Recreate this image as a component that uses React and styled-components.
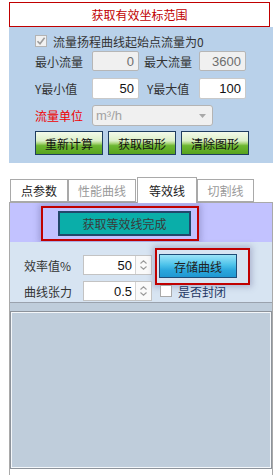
import React from "react";
import styled, { createGlobalStyle } from "styled-components";

const GlobalStyle = createGlobalStyle`
  html, body {
    margin: 0;
    padding: 0;
    background: #ffffff;
  }
  body {
    font-family: "Noto Sans CJK SC", "Noto Sans", sans-serif;
    font-size: 12px;
    color: #222;
  }
  * { box-sizing: border-box; }
`;

const Page = styled.div`
  width: 274px;
  height: 475px;
  padding-left: 9px;
  overflow: hidden;
`;

const HeaderBox = styled.div`
  margin-top: 2px;
  width: 261px;
  height: 25px;
  border: 1px solid #c00000;
  background: #fff;
  color: #c00000;
  display: flex;
  align-items: center;
  justify-content: center;
  font-size: 12px;
`;

const RangePanel = styled.div`
  width: 264px;
  height: 136px;
  background: #b9d1ea;
  padding: 6px 0 0 26px;
  display: flex;
  flex-direction: column;
`;

const Row = styled.div`
  display: flex;
  align-items: center;
  height: ${(p) => p.h || 21}px;
  margin-top: ${(p) => p.mt || 0}px;
`;

const CheckBox = styled.span`
  width: 12px;
  height: 12px;
  border: 1px solid ${(p) => (p.disabled ? "#b4b4b4" : "#a9a9a9")};
  background: ${(p) => (p.disabled ? "#f2f2f2" : "#fff")};
  display: inline-flex;
  align-items: center;
  justify-content: center;
  margin-left: ${(p) => p.ml || 0}px;
`;

const CheckText = styled.span`
  margin-left: ${(p) => p.ml || 6}px;
  color: ${(p) => p.color || "#333"};
  font-size: 12px;
`;

const Label = styled.span`
  width: ${(p) => p.w}px;
  margin-left: ${(p) => p.ml || 0}px;
  color: ${(p) => p.color || "#333"};
  white-space: nowrap;
  font-size: 12px;
`;

const NumBox = styled.div`
  width: 47px;
  height: ${(p) => p.h || 20}px;
  border: 1px solid ${(p) => (p.disabled ? "#b6b6b6" : "#c9c9c9")};
  border-radius: 2px;
  background: ${(p) => (p.disabled ? "#f0f0f0" : "#fff")};
  color: ${(p) => (p.disabled ? "#6d6d6d" : "#111")};
  font-family: "Liberation Sans", "Noto Sans", sans-serif;
  font-size: 13px;
  display: flex;
  align-items: center;
  justify-content: flex-end;
  padding-right: 4px;
`;

const SelectBox = styled.div`
  width: 121px;
  height: 21px;
  border: 1px solid #b4b4b4;
  border-radius: 3px;
  background: #f0f0f0;
  color: #a2a2a2;
  font-family: "Liberation Sans", "Noto Sans", sans-serif;
  font-size: 13px;
  display: flex;
  align-items: center;
  justify-content: space-between;
  padding: 0 6px 0 3px;
`;

const GreenButton = styled.div`
  width: 68px;
  height: 24px;
  border: 1px solid #1f3d5f;
  background: linear-gradient(
    to bottom,
    #f3faea 0%,
    #dcefc8 40%,
    #a9d57a 52%,
    #6db732 62%,
    #58a31d 100%
  );
  display: flex;
  align-items: center;
  justify-content: center;
  color: #111;
  font-size: 12px;
  margin-right: 5px;
`;

const TabStrip = styled.div`
  margin-top: 14px;
  height: 25px;
  display: flex;
  align-items: flex-end;
  padding-left: 1px;
`;

const Tab = styled.div`
  width: ${(p) => p.w}px;
  height: ${(p) => (p.active ? 26 : 23)}px;
  margin-left: ${(p) => p.ml || 0}px;
  margin-bottom: ${(p) => (p.active ? -1 : 0)}px;
  border: 1px solid #a9a9a9;
  border-bottom: ${(p) => (p.active ? "none" : "1px solid #a9a9a9")};
  background: #fff;
  color: ${(p) => (p.muted ? "#9a9a9a" : "#222")};
  display: flex;
  align-items: center;
  justify-content: center;
  font-size: 12px;
  position: relative;
  z-index: ${(p) => (p.active ? 2 : 1)};
`;

const TabBody = styled.div`
  width: 264px;
  height: 274px;
  border: 1px solid #a9a9a9;
  border-bottom: none;
  display: flex;
  flex-direction: column;
`;

const LavenderBand = styled.div`
  height: 39px;
  background: #c2c2ff;
  padding: 3px 0 0 31px;
`;

const Highlight = styled.div`
  width: ${(p) => p.w}px;
  height: ${(p) => p.h}px;
  border: 2px solid #c00000;
  box-shadow: 0 0 6px 2px rgba(90, 90, 140, 0.35);
  padding: ${(p) => p.pad};
  margin: ${(p) => p.m || 0};
  flex-shrink: 0;
`;

const TealButton = styled.div`
  width: 133px;
  height: 25px;
  border: 2px solid #22476b;
  background: #0aaea9;
  color: #3a3a3a;
  display: flex;
  align-items: center;
  justify-content: center;
  font-size: 12px;
`;

const LightSection = styled.div`
  flex: 1;
  background: #d7e4f2;
  padding: 13px 0 0 0;
  display: flex;
  flex-direction: column;
`;

const ParamRow = styled.div`
  display: flex;
  align-items: center;
  height: 20px;
  padding-left: 14px;
  margin-top: ${(p) => p.mt || 0}px;
`;

const Spinner = styled.div`
  width: 69px;
  height: 20px;
  border: 1px solid #c3c3c3;
  background: #fff;
  display: flex;
`;

const SpinValue = styled.div`
  flex: 1;
  display: flex;
  align-items: center;
  justify-content: flex-end;
  padding-right: 3px;
  font-family: "Liberation Sans", "Noto Sans", sans-serif;
  font-size: 13px;
  color: #111;
`;

const SpinArrows = styled.div`
  width: 16px;
  border-left: 1px solid #d4d4d4;
  background: #fafafa;
  display: flex;
  flex-direction: column;
  align-items: center;
  justify-content: center;
  gap: 2px;
`;

const BlueButton = styled.div`
  width: 78px;
  height: 24px;
  border: 1px solid #1f4d78;
  background: linear-gradient(to bottom, #9be4f8 0%, #4cc2ea 45%, #2aa6dc 70%, #1f98d2 100%);
  color: #222;
  display: flex;
  align-items: center;
  justify-content: center;
  font-size: 12px;
`;

const ChartWrap = styled.div`
  margin-top: 1px;
  flex: 1;
  border-top: 1px solid #9aa2ad;
  background: #bfcddb;
  padding-top: 8px;
  display: flex;
  flex-direction: column;
`;

const ChartPanel = styled.div`
  height: 158px;
  border: 1px solid #8d939b;
  box-shadow: inset 0 0 0 1px #f4f7fa;
  background: #bfcddb;
`;

const BottomGap = styled.div`
  flex: 1;
  background: #fff;
`;

const Check = ({ color = "#9c9c9c" }) => (
  <svg width="10" height="10" viewBox="0 0 10 10">
    <path d="M1.5 5.2 L4 7.8 L8.6 1.8" fill="none" stroke={color} strokeWidth="1.6" />
  </svg>
);

const Chevron = ({ up }) => (
  <svg width="7" height="4" viewBox="0 0 7 4">
    <path
      d={up ? "M0.5 3.5 L3.5 0.8 L6.5 3.5" : "M0.5 0.5 L3.5 3.2 L6.5 0.5"}
      fill="none"
      stroke="#9a9a9a"
      strokeWidth="1.1"
    />
  </svg>
);

const NumberSpinner = ({ value }) => (
  <Spinner>
    <SpinValue>{value}</SpinValue>
    <SpinArrows>
      <Chevron up />
      <Chevron />
    </SpinArrows>
  </Spinner>
);

const tabs = [
  { label: "点参数", w: 58 },
  { label: "性能曲线", w: 68, muted: true },
  { label: "等效线", w: 60, active: true, ml: 1 },
  { label: "切割线", w: 57, muted: true },
];

export default function App() {
  return (
    <Page>
      <GlobalStyle />
      <HeaderBox>获取有效坐标范围</HeaderBox>
      <RangePanel>
        <Row h={16}>
          <CheckBox disabled>
            <Check />
          </CheckBox>
          <CheckText ml={6}>流量扬程曲线起始点流量为0</CheckText>
        </Row>
        <Row h={20} mt={2}>
          <Label w={57}>最小流量</Label>
          <NumBox disabled>0</NumBox>
          <Label w={55} ml={5}>最大流量</Label>
          <NumBox disabled>3600</NumBox>
        </Row>
        <Row mt={7}>
          <Label w={57}>Y最小值</Label>
          <NumBox h={21}>50</NumBox>
          <Label w={52} ml={8}>Y最大值</Label>
          <NumBox h={21}>100</NumBox>
        </Row>
        <Row mt={6}>
          <Label w={57} color="#f00000">流量单位</Label>
          <SelectBox>
            <span>m³/h</span>
            <svg width="7" height="4" viewBox="0 0 7 4">
              <path d="M0 0 L7 0 L3.5 4 Z" fill="#a8a8a8" />
            </svg>
          </SelectBox>
        </Row>
        <Row h={24} mt={5}>
          <GreenButton>重新计算</GreenButton>
          <GreenButton>获取图形</GreenButton>
          <GreenButton>清除图形</GreenButton>
        </Row>
      </RangePanel>

      <TabStrip>
        {tabs.map((t) => (
          <Tab key={t.label} w={t.w} active={t.active} muted={t.muted} ml={t.ml}>
            {t.label}
          </Tab>
        ))}
      </TabStrip>
      <TabBody>
        <LavenderBand>
          <Highlight w={158} h={35} pad="3px 0 0 15px">
            <TealButton>获取等效线完成</TealButton>
          </Highlight>
        </LavenderBand>
        <LightSection>
          <ParamRow>
            <Label w={59}>效率值%</Label>
            <NumberSpinner value="50" />
            <Highlight w={95} h={37} pad="4px 0 0 2px" m="-7px 0 -10px 3px">
              <BlueButton>存储曲线</BlueButton>
            </Highlight>
          </ParamRow>
          <ParamRow mt={6}>
            <Label w={59}>曲线张力</Label>
            <NumberSpinner value="0.5" />
            <CheckBox ml={8}>{null}</CheckBox>
            <CheckText ml={6} color="#1f3864">是否封闭</CheckText>
          </ParamRow>
          <ChartWrap>
            <ChartPanel />
            <BottomGap />
          </ChartWrap>
        </LightSection>
      </TabBody>
    </Page>
  );
}
